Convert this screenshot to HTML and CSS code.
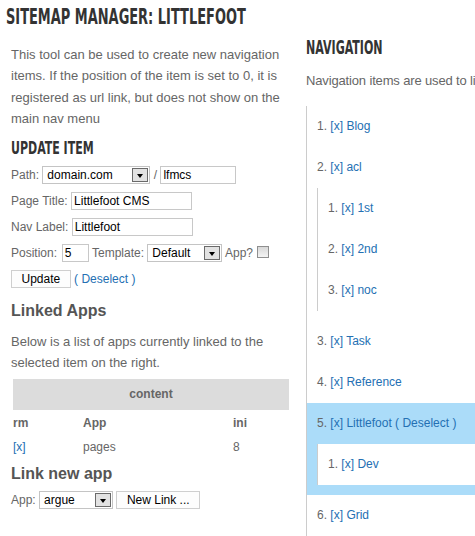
FILE: index.html
```html
<!DOCTYPE html>
<html lang="en">
<head>
<meta charset="utf-8">
<title>Sitemap Manager: Littlefoot</title>
<link rel="stylesheet" href="styles.css">
</head>
<body>
<div class="page">
  <div class="main">
    <h1 class="caps title">Sitemap Manager: Littlefoot</h1>
    <p class="intro">This tool can be used to create new navigation items. If the position of the item is set to 0, it is registered as url link, but does not show on the main nav menu</p>

    <h2 class="caps sub">Update Item</h2>
    <form class="form">
      <div class="row">Path: <span class="select w-domain"><span class="sel-text">domain.com</span><span class="sel-arrow"></span></span> / <span class="input w-path">lfmcs</span></div>
      <div class="row">Page Title: <span class="input w-title">Littlefoot CMS</span></div>
      <div class="row">Nav Label: <span class="input w-title">Littlefoot</span></div>
      <div class="row">Position: <span class="input w-pos">5</span> Template: <span class="select w-tpl"><span class="sel-text">Default</span><span class="sel-arrow"></span></span> App? <span class="check"></span></div>
      <div class="row"><span class="btn">Update</span> <a class="link" href="#">( Deselect )</a></div>
    </form>

    <h3 class="section">Linked Apps</h3>
    <p class="intro tight">Below is a list of apps currently linked to the selected item on the right.</p>

    <table class="apps">
      <colgroup><col class="c-rm"><col class="c-app"><col class="c-ini"></colgroup>
      <thead><tr><th colspan="3" class="group">content</th></tr></thead>
      <tbody>
        <tr><th>rm</th><th>App</th><th>ini</th></tr>
        <tr><td><a class="link" href="#">[x]</a></td><td>pages</td><td>8</td></tr>
      </tbody>
    </table>

    <h3 class="section link-new">Link new app</h3>
    <div class="row">App: <span class="select w-app"><span class="sel-text">argue</span><span class="sel-arrow"></span></span> <span class="btn">New Link ...</span></div>
  </div>

  <div class="side">
    <h2 class="caps nav-title">Navigation</h2>
    <p class="intro nav-intro">Navigation items are used to link pages and apps into the main menu.</p>
    <ol class="nav">
      <li><div class="item"><span class="num">1.</span> <a class="link" href="#">[x]</a> <a class="link" href="#">Blog</a></div></li>
      <li><div class="item"><span class="num">2.</span> <a class="link" href="#">[x]</a> <a class="link" href="#">acl</a></div>
        <ol class="nav sub-nav">
          <li><div class="item"><span class="num">1.</span> <a class="link" href="#">[x]</a> <a class="link" href="#">1st</a></div></li>
          <li><div class="item"><span class="num">2.</span> <a class="link" href="#">[x]</a> <a class="link" href="#">2nd</a></div></li>
          <li><div class="item"><span class="num">3.</span> <a class="link" href="#">[x]</a> <a class="link" href="#">noc</a></div></li>
        </ol>
      </li>
      <li><div class="item"><span class="num">3.</span> <a class="link" href="#">[x]</a> <a class="link" href="#">Task</a></div></li>
      <li><div class="item"><span class="num">4.</span> <a class="link" href="#">[x]</a> <a class="link" href="#">Reference</a></div></li>
      <li class="active"><div class="item"><span class="num">5.</span> <a class="link" href="#">[x]</a> <a class="link" href="#">Littlefoot</a> <a class="link" href="#">( Deselect )</a></div>
        <ol class="nav sub-nav">
          <li><div class="item"><span class="num">1.</span> <a class="link" href="#">[x]</a> <a class="link" href="#">Dev</a></div></li>
        </ol>
      </li>
      <li><div class="item"><span class="num">6.</span> <a class="link" href="#">[x]</a> <a class="link" href="#">Grid</a></div></li>
    </ol>
  </div>
</div>
</body>
</html>
```
FILE: styles.css
```css
html, body {
  margin: 0;
  padding: 0;
  overflow: hidden;
  background: #fff;
}

body {
  width: 475px;
  height: 536px;
  font-family: "Liberation Sans", Arial, sans-serif;
  color: #666;
}

.page {
  display: flex;
  align-items: flex-start;
}

.main {
  flex-shrink: 0;
  width: 280px;
  padding-left: 11px;
}

.side {
  flex-shrink: 0;
  width: 440px;
  margin-left: 15px;
}

/* condensed display headings */
.caps {
  margin: 0;
  font-family: "DejaVu Sans Condensed", "Liberation Sans Narrow", sans-serif;
  font-weight: bold;
  text-transform: uppercase;
  color: #333;
  white-space: nowrap;
  transform-origin: left center;
}

.title {
  margin: 4px 0 0 -5px;
  font-size: 22px;
  line-height: 26px;
  transform: scaleX(0.655);
}

.sub {
  margin-top: 8.5px;
  font-size: 17px;
  line-height: 20px;
  transform: scaleX(0.72);
}

.nav-title {
  margin-top: 37px;
  font-size: 19.5px;
  line-height: 22px;
  transform: scaleX(0.63);
}

.intro {
  margin: 13.5px 0 0;
  font-size: 13px;
  line-height: 21.5px;
}

.intro.tight {
  margin-top: 11.4px;
  line-height: 21px;
}

.nav-intro {
  margin-top: 11px;
  white-space: nowrap;
  letter-spacing: -0.15px;
}

.link {
  color: #2470b3;
  text-decoration: none;
}

/* form */
.form {
  margin-top: 7.7px;
}

.row {
  height: 18px;
  margin-bottom: 8px;
  font-size: 12px;
  line-height: 18px;
  white-space: nowrap;
}

.input {
  display: inline-block;
  box-sizing: border-box;
  height: 18px;
  padding: 0 2px;
  border: 1px solid #c8c8c8;
  background: #fff;
  color: #000;
  line-height: 16px;
  vertical-align: baseline;
}

.w-path { width: 76px; }
.w-title { width: 121px; }
.w-pos { width: 27px; margin-left: 1.5px; }

.select {
  display: inline-flex;
  box-sizing: border-box;
  height: 18px;
  border: 1px solid #c4c4c4;
  background: #fff;
  color: #000;
  line-height: 16px;
  vertical-align: baseline;
}

.sel-text {
  flex: 1;
  padding-left: 4px;
}

.sel-arrow {
  display: flex;
  align-items: center;
  justify-content: center;
  box-sizing: border-box;
  width: 16px;
  margin: 1px;
  border: 1px solid #6a6a6a;
  background: #e2e2e2;
}

.sel-arrow::after {
  content: "";
  margin-top: 2px;
  border-left: 3.5px solid transparent;
  border-right: 3.5px solid transparent;
  border-top: 4px solid #000;
}

.w-domain { width: 108px; }
.w-tpl { width: 75px; }
.w-app { width: 74px; }

.check {
  display: inline-block;
  box-sizing: border-box;
  width: 12px;
  height: 12px;
  margin: 2px 0 0 1px;
  border: 1px solid #8f8f8f;
  background: linear-gradient(#d8d8d8, #f4f4f4);
  vertical-align: top;
}

.btn {
  display: inline-block;
  box-sizing: border-box;
  height: 18px;
  padding: 0 9.5px;
  border: 1px solid #cfcfcf;
  background: #fdfdfd;
  color: #000;
  line-height: 16px;
  vertical-align: baseline;
}

/* sections */
.section {
  margin: 13px 0 0;
  font-size: 16px;
  line-height: 19px;
  font-weight: bold;
  color: #555;
}

.section.link-new {
  margin: 4px 0 7.6px;
}

.apps {
  width: 280px;
  margin-top: 4.2px;
  table-layout: fixed;
  border-spacing: 2px;
  font-size: 12px;
  line-height: 15px;
  color: #666;
}

.c-rm { width: 68px; }
.c-app { width: 148px; }

.apps th,
.apps td {
  padding: 3.4px 0 3.6px;
  text-align: left;
  vertical-align: top;
}

.apps th {
  font-weight: bold;
}

.apps th.group {
  padding: 8px 0;
  background: #dcdcdc;
  text-align: center;
}

/* navigation tree */
.nav {
  margin: 14.25px 0 0;
  padding: 0;
  list-style: none;
  border-left: 1px solid #cccccc;
  font-size: 12px;
  line-height: 15px;
}

.nav li {
  display: flow-root;
}

.nav .item {
  padding: 13px 10px;
  white-space: nowrap;
}

.num {
  color: #666;
}

.sub-nav {
  margin: 0 0 10px 10px;
  background: #fff;
}

.nav li.active {
  background: #abdcf9;
}
```
